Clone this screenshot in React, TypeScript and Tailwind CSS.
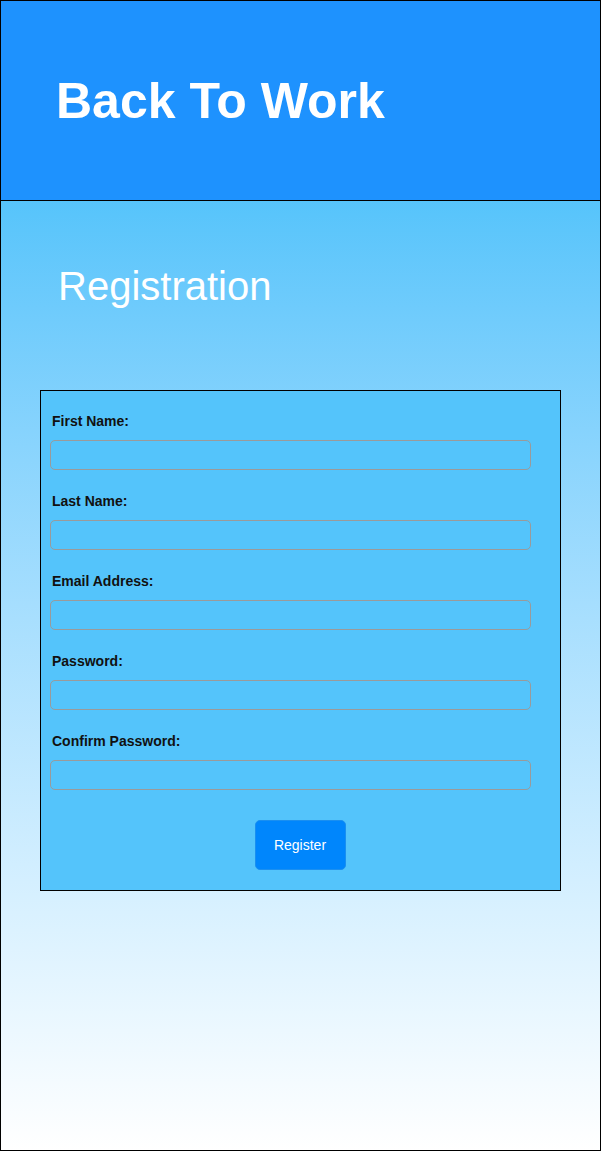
const fields = ["First Name:", "Last Name:", "Email Address:", "Password:", "Confirm Password:"];

const App = () => {
  return (
    <div className="w-[601px] h-[1151px] border border-black flex flex-col font-['Liberation_Sans',Arial,sans-serif]">
      <header className="h-[200px] shrink-0 bg-[#1e92fe] border-b border-black flex items-center pl-[55px]">
        <h1 className="text-[50px] font-bold text-white leading-none">Back To Work</h1>
      </header>

      <main className="flex-1 bg-gradient-to-b from-[#56c4fb] to-white">
        <h2 className="text-[40px] text-white leading-none pl-[57px] pt-[65px]">Registration</h2>

        <form className="mt-[84px] mx-[39px] w-[521px] h-[501px] border border-black bg-[#54c4fb] pt-[22px] px-[9px]">
          {fields.map((label) => (
            <div key={label} className="flex flex-col mb-[23px]">
              <label className="text-sm font-bold text-[#111] leading-4 ml-[2px] mb-[11px]">{label}</label>
              <input
                type="text"
                className="w-[481px] h-[30px] rounded-[5px] border border-[#9a9a9a] bg-transparent outline-none"
              />
            </div>
          ))}
          <div className="flex justify-center pt-[7px] pr-[1px]">
            <button
              type="button"
              className="w-[91px] h-[50px] rounded-[5px] bg-[#0086fc] border border-[#1a8ff0] text-white text-sm"
            >
              Register
            </button>
          </div>
        </form>
      </main>
    </div>
  );
};

export default App;
